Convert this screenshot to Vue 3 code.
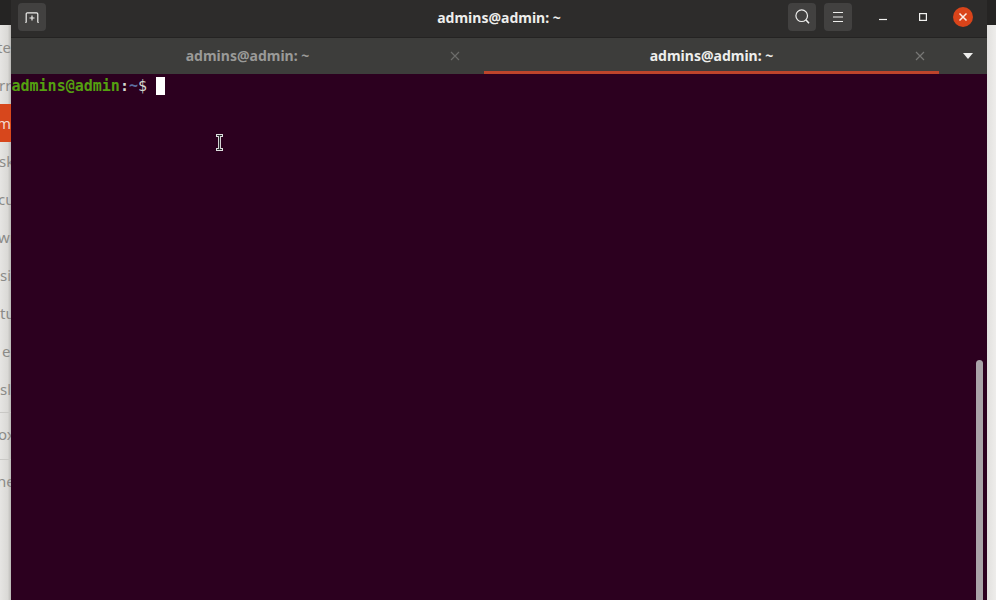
<script setup>
const items = [
  { text: 'te', offset: -3, color: '#8b8b88' },
  { text: 'rr', offset: -1, color: '#8b8b88' },
  { text: 'm', offset: -3, color: '#f4d9cf', active: true },
  { text: 'sk', offset: -1, color: '#8b8b88' },
  { text: 'cu', offset: -2, color: '#8b8b88' },
  { text: 'wr', offset: -2, color: '#8b8b88' },
  { text: 'si', offset: 0, color: '#8b8b88' },
  { text: 'tu', offset: 0, color: '#8b8b88' },
  { text: 'e', offset: 2, color: '#8b8b88' },
  { text: 'sl', offset: 0, color: '#8b8b88' },
]
const lower = [
  { text: 'ox', offset: -2 },
  { text: 'ne', offset: -3 },
]
</script>

<template>
  <div class="screen">
    <aside class="side left">
      <div class="side-top"></div>
      <div class="side-body">
        <div
          v-for="item in items"
          :key="item.text + item.offset"
          class="row"
          :class="{ active: item.active }"
        >
          <span class="clip" :style="{ marginLeft: item.offset + 'px', color: item.color }">{{ item.text }}</span>
        </div>
        <div class="gap"></div>
        <div v-for="item in lower" :key="item.text" class="row sep">
          <span class="clip" :style="{ marginLeft: item.offset + 'px' }">{{ item.text }}</span>
        </div>
      </div>
    </aside>

    <main class="window">
      <header class="head">
        <div class="head-left">
          <button class="hbtn">
            <svg width="16" height="16" viewBox="0 0 16 16" fill="none" stroke="#eeeeec" stroke-width="1.2">
              <path d="M1.3 13.5h.4c.3 0 .5-.2.5-.5V5c0-.7.5-1.2 1.2-1.2h9.2c.7 0 1.2.5 1.2 1.2v8c0 .3.2.5.5.5h.4" />
              <path d="M8 6.5v5M5.5 9h5" />
            </svg>
          </button>
        </div>
        <div class="title">admins@admin: ~</div>
        <div class="head-right">
          <button class="hbtn">
            <svg width="16" height="16" viewBox="0 0 16 16" fill="none" stroke="#eeeeec" stroke-width="1.2">
              <circle cx="7.7" cy="6.7" r="5.8" />
              <path d="M11.8 10.8l3.2 3.4" stroke-width="1.6" />
            </svg>
          </button>
          <button class="hbtn">
            <svg width="14" height="12" viewBox="0 0 14 12" stroke="#eeeeec" stroke-width="1.1">
              <path d="M2 1.5h10M2 6h10M2 10.5h10" />
            </svg>
          </button>
          <div class="wctl">
            <svg width="8" height="8" viewBox="0 0 8 8"><path d="M0 6.5h8" stroke="#f2f2f0" stroke-width="1.2" /></svg>
          </div>
          <div class="wctl">
            <svg width="8" height="8" viewBox="0 0 8 8" fill="none"><rect x="0.6" y="0.6" width="6.8" height="6.8" stroke="#f2f2f0" stroke-width="1.2" /></svg>
          </div>
          <div class="close">
            <svg width="10" height="10" viewBox="0 0 10 10" stroke="#fbeee9" stroke-width="1.5"><path d="M1.5 1.5l7 7M8.5 1.5l-7 7" /></svg>
          </div>
        </div>
      </header>

      <nav class="tabs">
        <div class="tab first">
          <span class="tab-text">admins@admin: ~</span>
          <svg class="tab-x" width="10" height="10" viewBox="0 0 10 10" stroke="#6c6c6a" stroke-width="1.2"><path d="M1 1l8 8M9 1l-8 8" /></svg>
        </div>
        <div class="tab current">
          <span class="tab-text">admins@admin: ~</span>
          <svg class="tab-x" width="10" height="10" viewBox="0 0 10 10" stroke="#777775" stroke-width="1.2"><path d="M1 1l8 8M9 1l-8 8" /></svg>
        </div>
        <div class="tab-menu">
          <svg width="10" height="6" viewBox="0 0 10 6"><path d="M0 0h10L5 6z" fill="#eeeeec" /></svg>
        </div>
      </nav>

      <section class="term">
        <div class="line"><span class="user">admins@admin</span><span class="colon">:</span><span class="path">~</span><span class="dollar">$ </span><span class="cursor"></span></div>
        <svg class="ibeam" width="9" height="17" viewBox="0 0 9 17" fill="none">
          <path d="M1 1.5h7M1 15.5h7M4.5 1.5v14" stroke="#dcdcdc" stroke-width="3" />
          <path d="M2 1.5h5M2 15.5h5M4.5 2v13" stroke="#2a2a2e" stroke-width="1.1" />
        </svg>
        <div class="scroll"></div>
      </section>
    </main>

    <aside class="side right">
      <div class="side-top"></div>
      <div class="side-body"></div>
    </aside>
  </div>
</template>

<style>
html, body { margin: 0; background: #2c2b2a; }
</style>

<style scoped>
.screen {
  width: 996px;
  height: 600px;
  display: flex;
  overflow: hidden;
  font-family: "Noto Sans", sans-serif;
}
.side {
  display: flex;
  flex-direction: column;
  flex: none;
  overflow: hidden;
}
.left { width: 11px; }
.right { width: 9px; }
.side-top { height: 25px; background: #252423; flex: none; }
.side-body {
  flex: 1;
  background: linear-gradient(90deg, #e6e5e3, #dad9d6 70%, #b9b8b5);
  padding-top: 3px;
  display: flex;
  flex-direction: column;
}
.right .side-body { background: linear-gradient(90deg, #e2e1df, #eeedeb); }
.row {
  height: 38px;
  flex: none;
  display: flex;
  align-items: center;
  overflow: hidden;
  font-size: 15px;
  color: #8b8b88;
  white-space: nowrap;
}
.row.active { background: #d7471c; }
.gap { height: 4px; flex: none; }
.row.sep {
  height: 47px;
  padding-bottom: 4px;
  border-top: 1px solid #c9c8c5;
  box-sizing: border-box;
}
.clip { display: block; }
.window {
  flex: 1;
  min-width: 0;
  display: flex;
  flex-direction: column;
  background: #2c001f;
}
.head {
  height: 37px;
  flex: none;
  background: #2d2c2b;
  display: grid;
  grid-template-columns: 1fr auto 1fr;
  align-items: center;
  padding-bottom: 3px;
  box-sizing: border-box;
}
.head-left { padding-left: 7px; display: flex; }
.head-right { display: flex; justify-content: flex-end; align-items: center; gap: 8px; }
.title {
  color: #eeeeec;
  font-size: 14px;
  font-weight: 700;
}
.hbtn {
  width: 28px;
  height: 28px;
  margin: 0;
  padding: 0;
  border: 0;
  border-radius: 4px;
  background: #424140;
  display: flex;
  align-items: center;
  justify-content: center;
}
.wctl {
  width: 32px;
  height: 28px;
  display: flex;
  align-items: center;
  justify-content: center;
}
.head-right .wctl:nth-of-type(1) { margin-left: 7px; }
.close {
  width: 20px;
  height: 20px;
  margin: 0 14px 0 6px;
  border-radius: 50%;
  background: #d9441a;
  display: flex;
  align-items: center;
  justify-content: center;
}
.tabs {
  height: 37px;
  flex: none;
  display: flex;
  background: #3d3d3b;
  border-top: 1px solid #242322;
  box-sizing: border-box;
}
.tab {
  flex: none;
  position: relative;
  display: flex;
  align-items: center;
  justify-content: center;
  box-sizing: border-box;
}
.tab.first { width: 473px; padding-bottom: 2px; }
.tab.current { width: 455px; border-bottom: 3px solid #bd442b; padding-top: 1px; }
.tab-text {
  color: #9a9a98;
  font-size: 14px;
  font-weight: 700;
}
.tab.current .tab-text { color: #eeeeec; }
.tab-x {
  position: absolute;
  top: 13px;
  right: 24px;
}
.tab.current .tab-x { right: 14px; }
.tab-menu {
  width: 48px;
  flex: none;
  padding-left: 10px;
  box-sizing: border-box;
  display: flex;
  align-items: center;
  justify-content: center;
}
.term {
  flex: 1;
  position: relative;
  padding: 2px 0 0 0.5px;
  overflow: hidden;
}
.line {
  display: flex;
  align-items: center;
  height: 20px;
  font-family: "DejaVu Sans Mono", monospace;
  font-size: 15px;
  font-weight: 700;
  white-space: pre;
}
.user { color: #54a010; }
.colon { color: #d3d7cf; }
.path { color: #5b6fa0; }
.dollar { color: #d3d7cf; font-weight: 400; }
.cursor {
  width: 9px;
  height: 18px;
  background: #fff;
}
.ibeam {
  position: absolute;
  left: 204px;
  top: 60px;
}
.scroll {
  position: absolute;
  left: 965px;
  top: 286px;
  bottom: 0;
  width: 7px;
  border-radius: 4px 4px 0 0;
  background: #a9a3a8;
}
</style>
